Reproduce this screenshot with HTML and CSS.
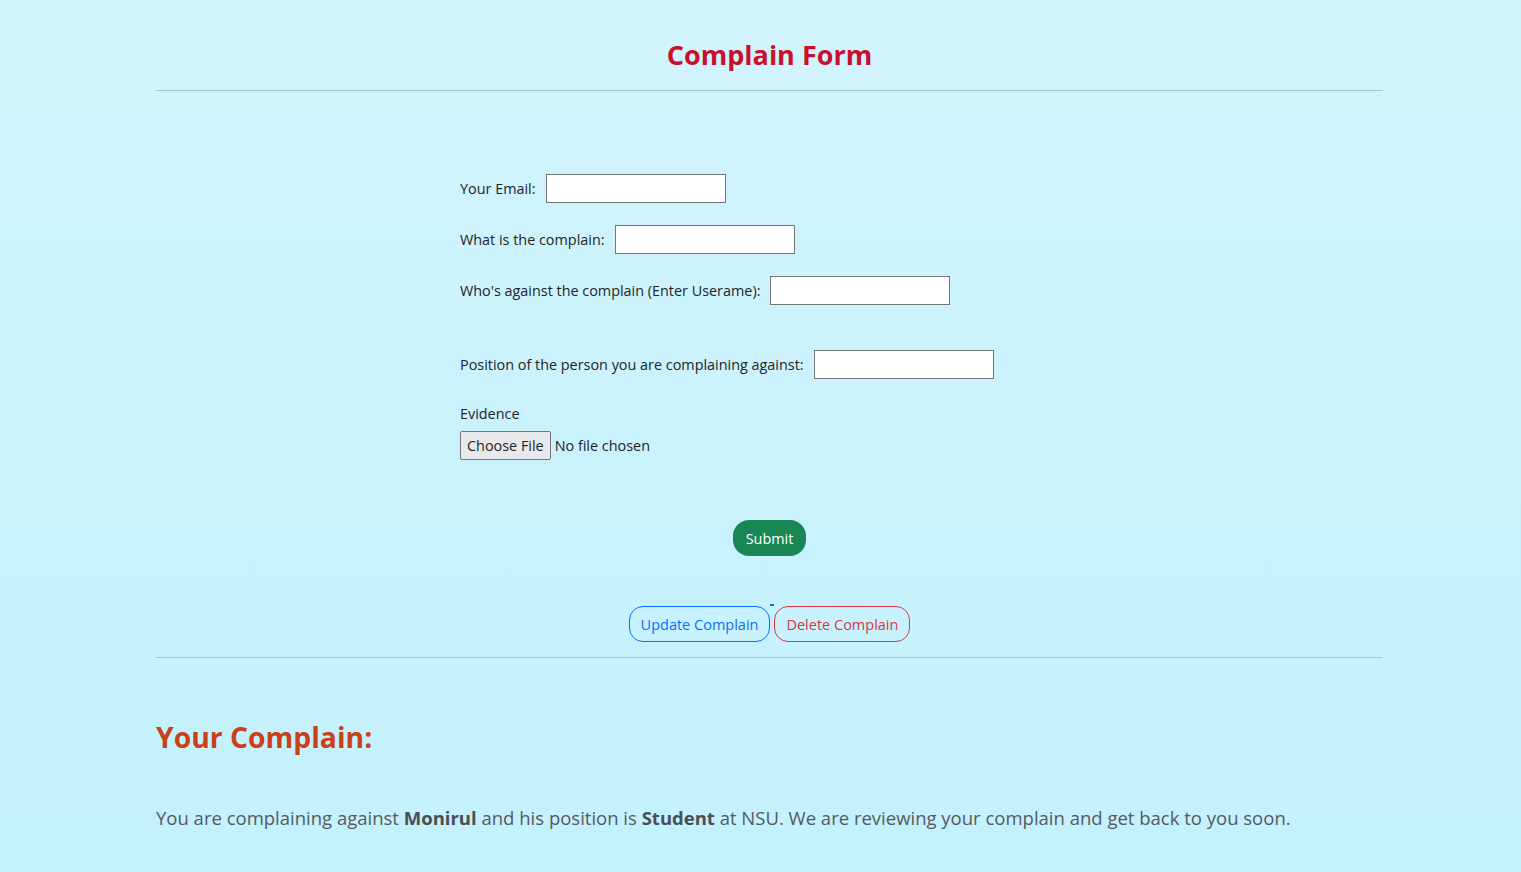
FILE: index.html
```html
<!DOCTYPE html>
<html lang="en">
<head>
<meta charset="utf-8">
<title>Complain Form</title>
<link rel="stylesheet" href="styles.css">
</head>
<body>
<div class="page">
  <h2 class="title">Complain Form</h2>
  <hr class="rule">
  <form class="form">
    <div class="row"><label>Your Email:</label><input class="field" type="text"></div>
    <div class="row"><label>What is the complain:</label><input class="field" type="text"></div>
    <div class="row"><label>Who's against the complain (Enter Userame):</label><input class="field" type="text"></div>
    <div class="row row-spaced"><label>Position of the person you are complaining against:</label><input class="field" type="text"></div>
    <div class="evidence">
      <div class="ev-label">Evidence</div>
      <div class="file"><span class="file-btn">Choose File</span><span class="file-text">No file chosen</span></div>
    </div>
    <div class="submit-wrap"><button type="button" class="btn-submit">Submit</button></div>
  </form>
  <div class="actions">
    <button type="button" class="btn-outline btn-blue">Update Complain</button><span class="gap"></span><button type="button" class="btn-outline btn-red">Delete Complain</button>
  </div>
  <hr class="rule rule-bottom">
  <h2 class="sub">Your Complain:</h2>
  <p class="msg">You are complaining against <b>Monirul</b> and his position is <b>Student</b> at NSU. We are reviewing your complain and get back to you soon.</p>
</div>
</body>
</html>
```
FILE: styles.css
```css
html, body {
  margin: 0;
  padding: 0;
}
body {
  min-height: 100vh;
  background: linear-gradient(180deg, #d2f4fc 0%, #c3f1fe 100%);
  font-family: "Open Sans", "Noto Sans", sans-serif;
  color: #212529;
}
.page {
  margin: 0 138px 0 156px;
  padding-top: 36px;
}
.title {
  margin: 0;
  text-align: center;
  color: #c8102e;
  font-size: 27px;
  font-weight: 700;
  line-height: 38px;
}
.rule {
  margin: 16px 0 0;
  border: 0;
  border-top: 1px solid #a8c3c9;
  height: 0;
}
.rule-bottom {
  margin-top: 15px;
}
.form {
  margin-left: 304px;
  padding-top: 83px;
  font-size: 14.4px;
}
.row {
  display: flex;
  align-items: center;
  gap: 10px;
  height: 29px;
  margin-bottom: 22px;
}
.row-spaced {
  margin-top: 45px;
}
.field {
  box-sizing: border-box;
  width: 180px;
  height: 29px;
  border: 1px solid #767676;
  background: #fff;
  margin: 0;
  padding: 0 4px;
}
.evidence {
  margin-top: 25px;
}
.ev-label {
  line-height: 20px;
}
.file {
  display: flex;
  align-items: center;
  margin-top: 7px;
  height: 29px;
}
.file-btn {
  box-sizing: border-box;
  height: 29px;
  padding: 0 6px;
  display: flex;
  align-items: center;
  border: 1px solid #767676;
  background: #e9e9ed;
  border-radius: 2px;
  color: #212529;
}
.file-text {
  margin-left: 4px;
}
.submit-wrap {
  margin-top: 60px;
  margin-left: -304px;
  display: flex;
  justify-content: center;
}
.btn-submit {
  box-sizing: border-box;
  height: 36px;
  width: 73px;
  border: 0;
  border-radius: 16px;
  background: #198754;
  color: #fff;
  font-family: inherit;
  font-size: 14.4px;
}
.actions {
  display: flex;
  justify-content: center;
  align-items: center;
  margin-top: 50px;
}
.gap {
  width: 4px;
  height: 2px;
  background: #0d6efd;
  align-self: flex-start;
  margin-top: -2px;
}
.btn-outline {
  box-sizing: border-box;
  height: 36px;
  padding: 0 11px;
  border-radius: 14px;
  background: transparent;
  font-family: inherit;
  font-size: 14.5px;
}
.btn-blue {
  border: 1px solid #0d6efd;
  color: #0d6efd;
}
.btn-red {
  border: 1px solid #dc3545;
  color: #dc3545;
}
.sub {
  margin: 59px 0 0;
  color: #c9401a;
  font-size: 28.3px;
  font-weight: 700;
  line-height: 40px;
}
.msg {
  margin: 47px 0 0;
  font-size: 18.5px;
  color: #555a5e;
  line-height: 28px;
}
.msg b {
  color: #4a4f53;
}
```
